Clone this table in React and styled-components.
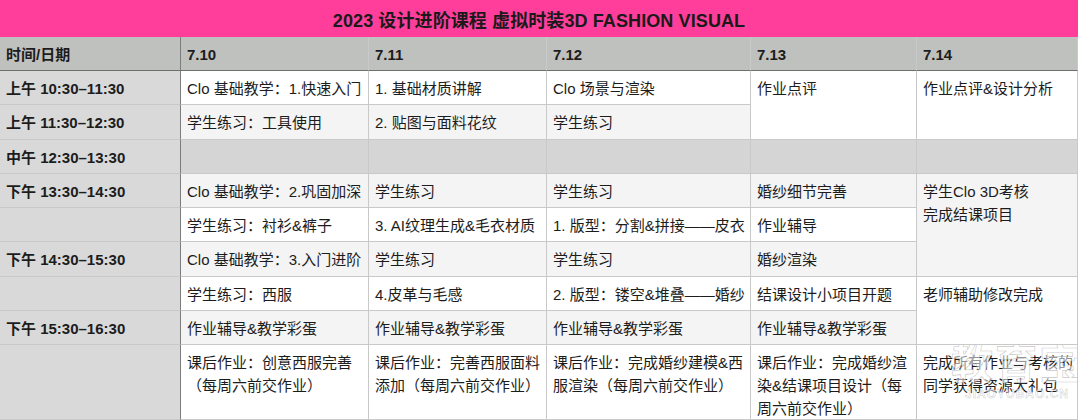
import React from "react";
import styled, { createGlobalStyle } from "styled-components";

const GlobalStyle = createGlobalStyle`
  html, body {
    margin: 0;
    padding: 0;
    background: #ffffff;
  }
  body {
    font-family: "Liberation Sans", "Noto Sans CJK SC", sans-serif;
    color: #1c1c1c;
  }
`;

const Page = styled.div`
  width: 1078px;
  height: 420px;
  overflow: hidden;
`;

const TitleBar = styled.div`
  height: 37px;
  background: #ff3e9b;
  display: flex;
  align-items: center;
  justify-content: center;
  font-size: 18px;
  font-weight: 600;
  color: #1a1a1a;
  letter-spacing: 0.1px;
`;

const Grid = styled.div`
  display: grid;
  grid-template-columns: 181px 188px 178px 204px 166px 161px;
  grid-template-rows: 34px 34px 35px 34px 34px 34px 35px 34px 34px 75px;
`;

const tones = {
  head: "#bfc1bf",
  time: "#d9d9d9",
  white: "#ffffff",
  soft: "#f4f4f4",
  lunch: "#d5d5d5",
};

const Cell = styled.div`
  box-sizing: border-box;
  position: relative;
  grid-row: span ${(p) => p.$span || 1};
  background: ${(p) => tones[p.$tone] || "#ffffff"};
  border-right: 1px solid ${(p) => (p.$first ? "#7c7c7c" : "#c9c9c9")};
  border-bottom: 1px solid ${(p) => (p.$tone === "head" ? "#6f6f6f" : "#c9c9c9")};
  padding: 6px 4px 0 6px;
  font-size: 15px;
  line-height: 23px;
  font-weight: ${(p) => (p.$bold ? 700 : 400)};
  white-space: pre-line;
  overflow: hidden;
`;

const Watermark = styled.div`
  position: absolute;
  right: -6px;
  top: -2px;
  display: flex;
  flex-direction: column;
  align-items: center;
  pointer-events: none;
`;

const MarkBig = styled.span`
  font-size: 42px;
  line-height: 44px;
  font-weight: 700;
  color: rgba(255, 255, 255, 0.55);
  -webkit-text-stroke: 0.6px rgba(150, 150, 150, 0.55);
  letter-spacing: 2px;
`;

const MarkSmall = styled.span`
  font-size: 12px;
  line-height: 14px;
  font-weight: 700;
  color: rgba(255, 255, 255, 0.5);
  -webkit-text-stroke: 0.5px rgba(150, 150, 150, 0.5);
  letter-spacing: 1px;
`;

const rows = [
  {
    tone: "head",
    cells: [{ t: "时间/日期" }, { t: "7.10" }, { t: "7.11" }, { t: "7.12" }, { t: "7.13" }, { t: "7.14" }],
  },
  {
    tone: "white",
    time: "上午 10:30–11:30",
    cells: [
      { t: "Clo 基础教学：1.快速入门" },
      { t: "1. 基础材质讲解" },
      { t: "Clo 场景与渲染" },
      { t: "作业点评", span: 2 },
      { t: "作业点评&设计分析", span: 2 },
    ],
  },
  {
    tone: "soft",
    time: "上午 11:30–12:30",
    cells: [{ t: "学生练习：工具使用" }, { t: "2. 贴图与面料花纹" }, { t: "学生练习" }],
  },
  {
    tone: "lunch",
    time: "中午 12:30–13:30",
    cells: [{ t: "" }, { t: "" }, { t: "" }, { t: "" }, { t: "" }],
  },
  {
    tone: "soft",
    time: "下午 13:30–14:30",
    cells: [
      { t: "Clo 基础教学：2.巩固加深" },
      { t: "学生练习" },
      { t: "学生练习" },
      { t: "婚纱细节完善" },
      { t: "学生Clo 3D考核\n完成结课项目", span: 3 },
    ],
  },
  {
    tone: "white",
    time: "",
    cells: [
      { t: "学生练习：衬衫&裤子" },
      { t: "3. AI纹理生成&毛衣材质" },
      { t: "1. 版型：分割&拼接——皮衣" },
      { t: "作业辅导" },
    ],
  },
  {
    tone: "soft",
    time: "下午 14:30–15:30",
    cells: [{ t: "Clo 基础教学：3.入门进阶" }, { t: "学生练习" }, { t: "学生练习" }, { t: "婚纱渲染" }],
  },
  {
    tone: "white",
    time: "",
    cells: [
      { t: "学生练习：西服" },
      { t: "4.皮革与毛感" },
      { t: "2. 版型：镂空&堆叠——婚纱" },
      { t: "结课设计小项目开题" },
      { t: "老师辅助修改完成", span: 2 },
    ],
  },
  {
    tone: "soft",
    time: "下午 15:30–16:30",
    cells: [
      { t: "作业辅导&教学彩蛋" },
      { t: "作业辅导&教学彩蛋" },
      { t: "作业辅导&教学彩蛋" },
      { t: "作业辅导&教学彩蛋" },
    ],
  },
  {
    tone: "white",
    time: "",
    cells: [
      { t: "课后作业：创意西服完善（每周六前交作业）" },
      { t: "课后作业：完善西服面料添加（每周六前交作业）" },
      { t: "课后作业：完成婚纱建模&西服渲染（每周六前交作业）" },
      { t: "课后作业：完成婚纱渲染&结课项目设计（每周六前交作业）" },
      { t: "完成所有作业与考核的同学获得资源大礼包", mark: true },
    ],
  },
];

const App = () => {
  return (
    <Page>
      <GlobalStyle />
      <TitleBar>2023 设计进阶课程 虚拟时装3D FASHION VISUAL</TitleBar>
      <Grid>
        {rows.map((row, r) => {
          if (row.tone === "head") {
            return row.cells.map((c, i) => (
              <Cell key={`h${i}`} $tone="head" $bold $first={i === 0}>
                {c.t}
              </Cell>
            ));
          }
          return [
            <Cell key={`t${r}`} $tone="time" $bold $first>
              {row.time}
            </Cell>,
            ...row.cells.map((c, i) => {
              const tone = c.span ? (row.tone === "soft" ? "soft" : "white") : row.tone;
              return (
                <Cell key={`c${r}-${i}`} $tone={tone} $span={c.span}>
                  {c.t}
                  {c.mark && (
                    <Watermark>
                      <MarkBig>教育宝</MarkBig>
                      <MarkSmall>JIAOYUBAO.CN</MarkSmall>
                    </Watermark>
                  )}
                </Cell>
              );
            }),
          ];
        })}
      </Grid>
    </Page>
  );
};

export default App;
